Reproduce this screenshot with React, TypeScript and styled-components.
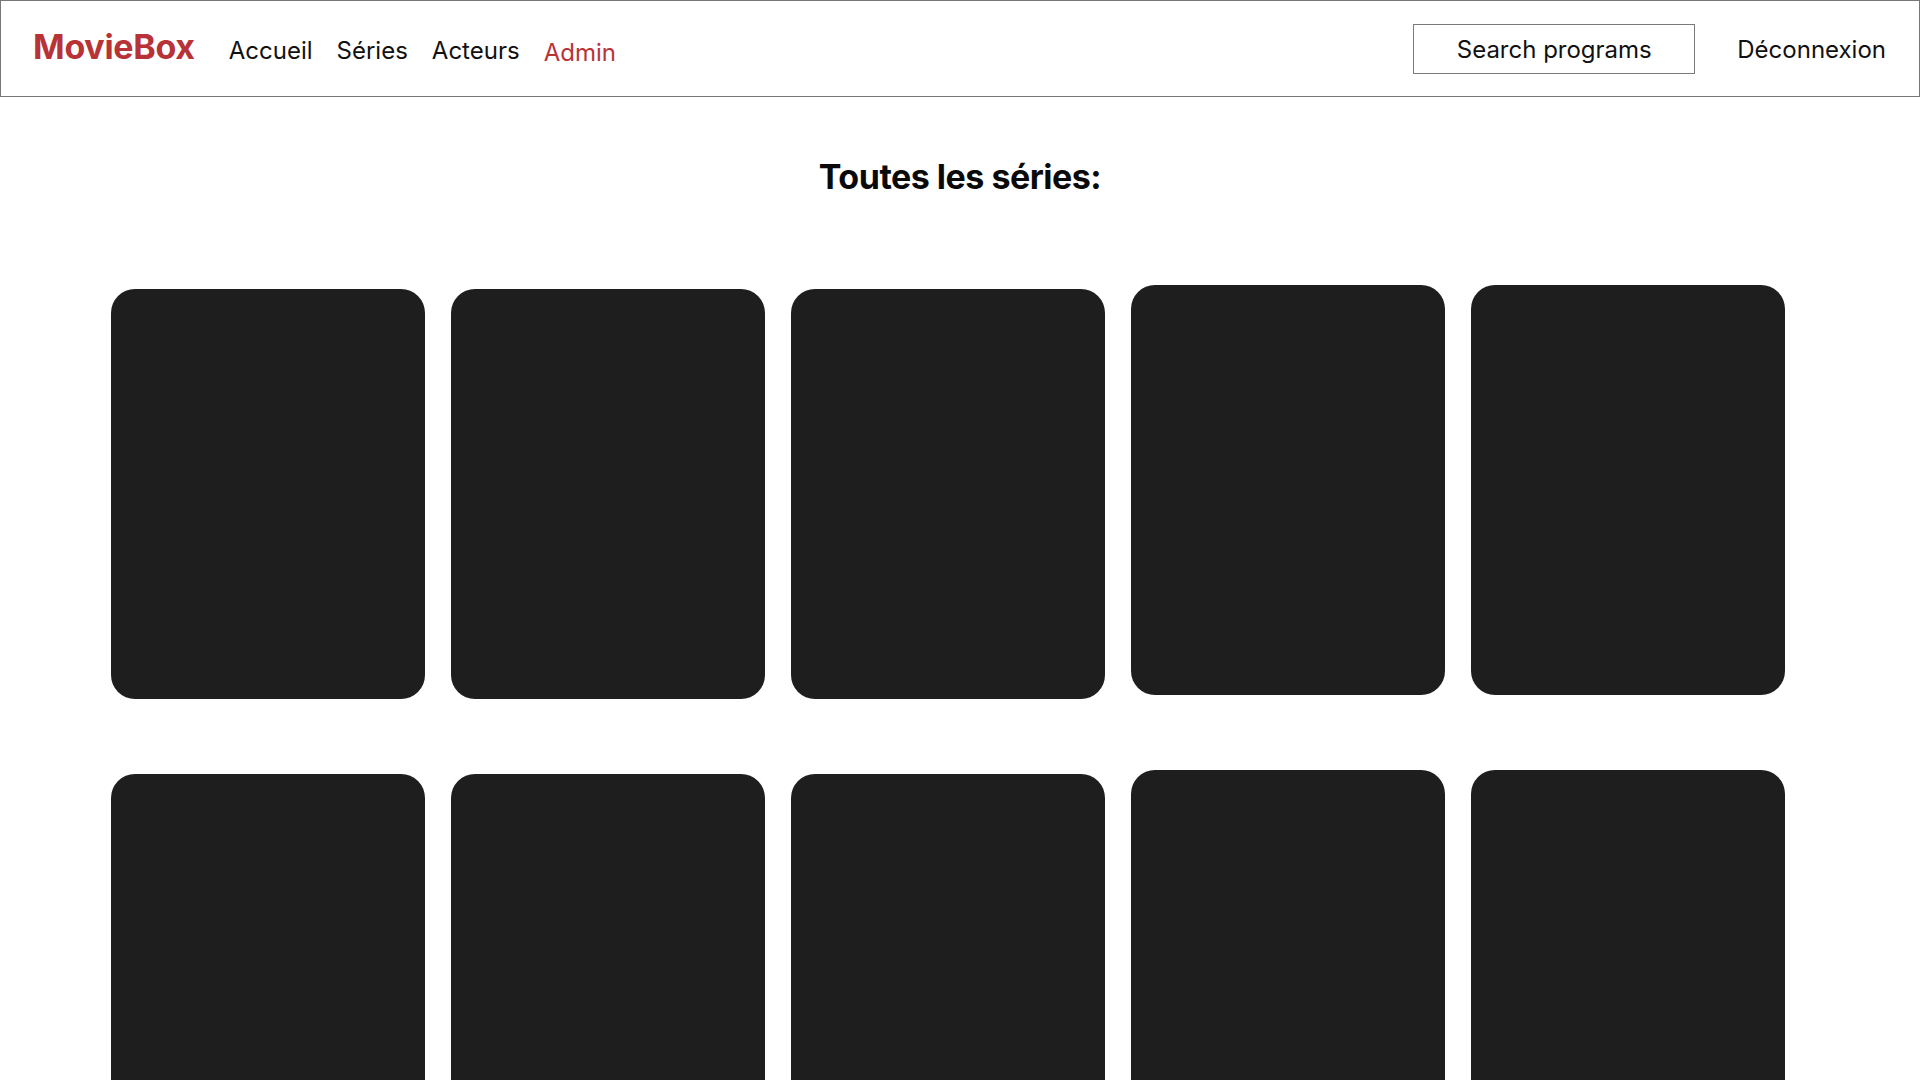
import styled, { createGlobalStyle } from "styled-components";

const GlobalStyle = createGlobalStyle`
  html, body {
    margin: 0;
    padding: 0;
    background: #ffffff;
    font-family: Inter, "Noto Sans", "Liberation Sans", sans-serif;
    color: #111111;
  }
  * {
    box-sizing: border-box;
  }
`;

const Header = styled.header`
  height: 97px;
  border: 1px solid #777777;
  display: flex;
  align-items: center;
  justify-content: space-between;
  padding: 0 33px 0 32px;
`;

const LeftGroup = styled.div`
  display: flex;
  align-items: baseline;
  gap: 34px;
  padding-bottom: 3px;
`;

const Logo = styled.a`
  font-size: 34px;
  font-weight: 700;
  line-height: 1;
  color: #b83337;
  letter-spacing: -0.3px;
  text-decoration: none;
  cursor: pointer;
`;

const Nav = styled.nav`
  display: flex;
  align-items: flex-start;
  gap: 24px;
`;

const NavLink = styled.a<{ $active?: boolean }>`
  font-size: 24px;
  line-height: 1;
  color: ${(p) => (p.$active ? "#b83337" : "#111111")};
  padding-top: ${(p) => (p.$active ? "2px" : "0")};
  text-decoration: none;
  cursor: pointer;
`;

const RightGroup = styled.div`
  display: flex;
  align-items: center;
  gap: 42px;
`;

const SearchInput = styled.input`
  width: 282px;
  height: 50px;
  border: 1px solid #7a7a7a;
  border-radius: 0;
  font-family: inherit;
  font-size: 24px;
  text-align: center;
  color: #111111;
  outline: none;
  padding: 2px 0 0 0;

  &::placeholder {
    color: #111111;
  }
`;

const Logout = styled.a`
  font-size: 24px;
  line-height: 1;
  color: #111111;
  padding-top: 2px;
  cursor: pointer;
`;

const Title = styled.h1`
  margin: 63px 0 0 0;
  font-size: 34px;
  line-height: 1;
  font-weight: 700;
  text-align: center;
  letter-spacing: -0.5px;
  color: #0a0a0a;
`;

const Grid = styled.div`
  display: grid;
  grid-template-columns: repeat(5, 314px);
  column-gap: 26px;
  row-gap: 75px;
  align-items: start;
  margin: 95px 0 0 111px;
`;

const Card = styled.div<{ $lift?: boolean }>`
  height: 410px;
  background: #1e1e1e;
  border-radius: 24px;
  margin-top: ${(p) => (p.$lift ? "-4px" : "0")};
  cursor: pointer;
`;

const series = Array.from({ length: 10 }, (_, i) => i);

export default function App() {
  return (
    <>
      <GlobalStyle />
      <Header>
        <LeftGroup>
          <Logo>MovieBox</Logo>
          <Nav>
            <NavLink>Accueil</NavLink>
            <NavLink>Séries</NavLink>
            <NavLink>Acteurs</NavLink>
            <NavLink $active>Admin</NavLink>
          </Nav>
        </LeftGroup>
        <RightGroup>
          <SearchInput placeholder="Search programs" />
          <Logout>Déconnexion</Logout>
        </RightGroup>
      </Header>
      <Title>Toutes les séries:</Title>
      <Grid>
        {series.map((i) => (
          <Card key={i} $lift={i % 5 >= 3} />
        ))}
      </Grid>
    </>
  );
}
